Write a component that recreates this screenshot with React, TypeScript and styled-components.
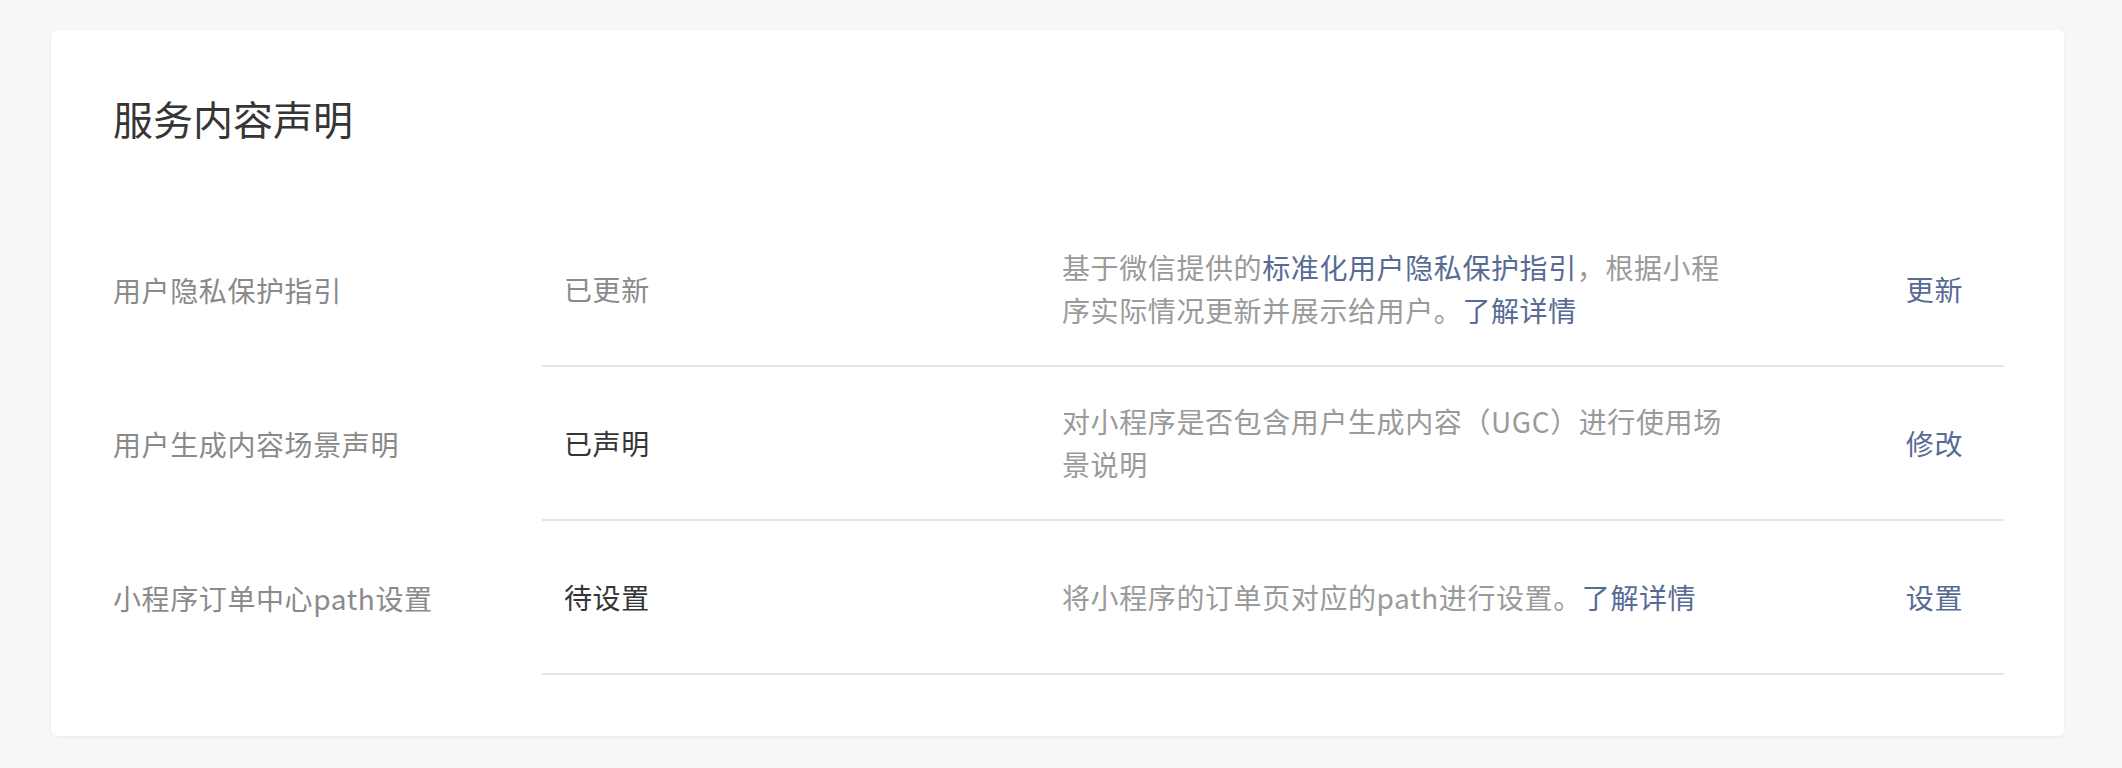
import React from 'react';
import styled, { createGlobalStyle } from 'styled-components';

interface Declaration {
  label: string;
  status: string;
  pending?: boolean;
  description: React.ReactNode;
  action: string;
}

const GlobalStyle = createGlobalStyle`
  html, body {
    margin: 0;
    padding: 0;
    background: #f6f7f9;
  }
  body {
    font-family: "PingFang SC", "Noto Sans CJK SC", "Noto Sans", sans-serif;
    -webkit-font-smoothing: antialiased;
  }
`;

const Page = styled.div`
  padding: 30px 58px 32px 51px;
`;

const Card = styled.section`
  background: #fff;
  border-radius: 6px;
  box-shadow: 0 1px 3px rgba(0, 0, 0, 0.06);
  padding: 60px 60px 61px 62px;
`;

const Title = styled.h2`
  margin: 0 0 67px;
  font-size: 40px;
  line-height: 56px;
  font-weight: 400;
  color: #353535;
`;

const Row = styled.div`
  display: grid;
  grid-template-columns: 429px 1fr;
  height: 154px;
`;

const Label = styled.div`
  display: flex;
  align-items: center;
  font-size: 28px;
  letter-spacing: 0.6px;
  color: #8a8a8a;
`;

const Body = styled.div`
  display: flex;
  align-items: center;
  border-bottom: 2px solid #e6e6ea;
`;

const Status = styled.div<{ $muted?: boolean }>`
  width: 520px;
  flex: none;
  box-sizing: border-box;
  padding-left: 22px;
  font-size: 28px;
  letter-spacing: 0.6px;
  color: ${({ $muted }) => ($muted ? '#8a8a8a' : '#353535')};
`;

const Description = styled.div`
  width: 680px;
  flex: none;
  font-size: 28px;
  line-height: 43px;
  letter-spacing: 0.6px;
  color: #9a9a9a;
`;

const Link = styled.a`
  color: #576b95;
  text-decoration: none;
  cursor: pointer;
`;

const Action = styled.a`
  margin-left: auto;
  padding-right: 41px;
  font-size: 28px;
  letter-spacing: 0.6px;
  color: #576b95;
  text-decoration: none;
  cursor: pointer;
`;

const rows: Declaration[] = [
  {
    label: '用户隐私保护指引',
    status: '已更新',
    pending: true,
    description: (
      <>
        基于微信提供的<Link>标准化用户隐私保护指引</Link>，根据小程序实际情况更新并展示给用户。
        <Link>了解详情</Link>
      </>
    ),
    action: '更新',
  },
  {
    label: '用户生成内容场景声明',
    status: '已声明',
    description: '对小程序是否包含用户生成内容（UGC）进行使用场景说明',
    action: '修改',
  },
  {
    label: '小程序订单中心path设置',
    status: '待设置',
    description: (
      <>
        将小程序的订单页对应的path进行设置。<Link>了解详情</Link>
      </>
    ),
    action: '设置',
  },
];

const App: React.FC = () => {
  return (
    <Page>
      <GlobalStyle />
      <Card>
        <Title>服务内容声明</Title>
        {rows.map((row) => (
          <Row key={row.label}>
            <Label>{row.label}</Label>
            <Body>
              <Status $muted={row.pending}>{row.status}</Status>
              <Description>{row.description}</Description>
              <Action>{row.action}</Action>
            </Body>
          </Row>
        ))}
      </Card>
    </Page>
  );
};

export default App;
